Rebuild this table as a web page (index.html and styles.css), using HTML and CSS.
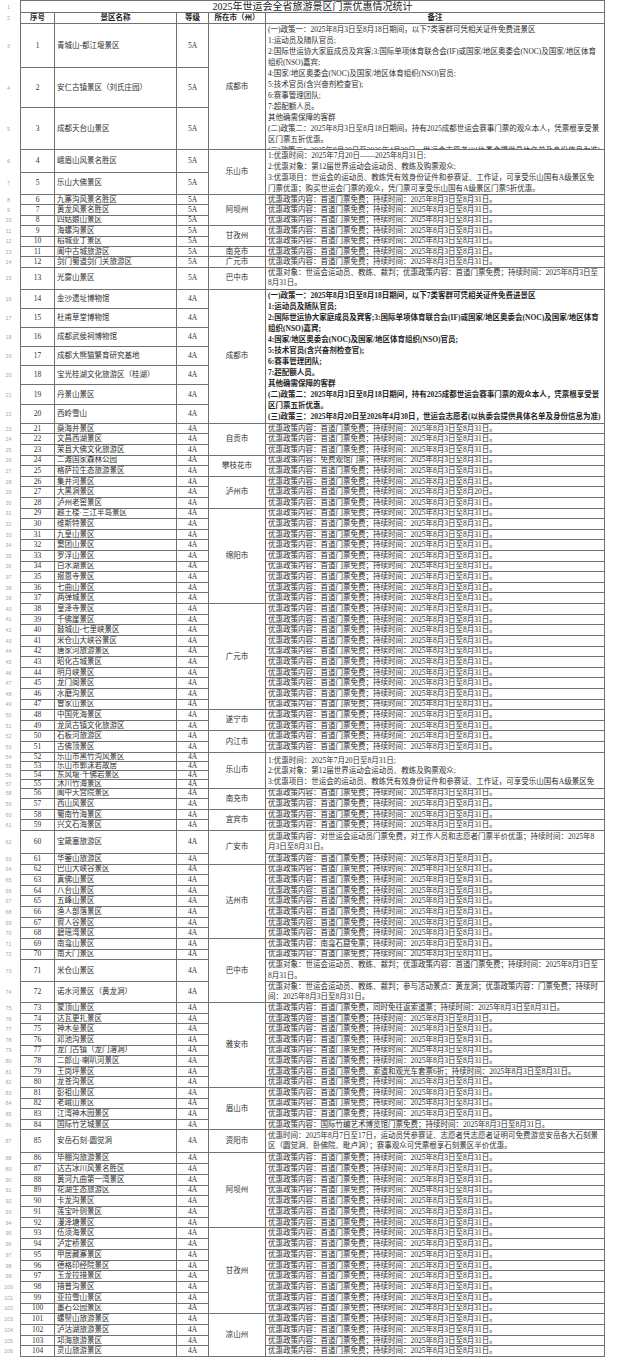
FILE: index.html
```html
<!DOCTYPE html>
<html lang="zh-CN">
<head>
<meta charset="utf-8">
<title>2025年世运会全省旅游景区门票优惠情况统计</title>
<link rel="stylesheet" href="styles.css">
</head>
<body>
<div class="page">
  <div class="rh rows">
    <span>1</span><span>2</span><span>3</span><span>4</span><span>5</span><span>6</span><span>7</span><span>8</span><span>9</span><span>10</span>
    <span>11</span><span>12</span><span>13</span><span>14</span><span>15</span><span>16</span><span>17</span><span>18</span><span>19</span><span>20</span>
    <span>21</span><span>22</span><span>23</span><span>24</span><span>25</span><span>26</span><span>27</span><span>28</span><span>29</span><span>30</span>
    <span>31</span><span>32</span><span>33</span><span>34</span><span>35</span><span>36</span><span>37</span><span>38</span><span>39</span><span>40</span>
    <span>41</span><span>42</span><span>43</span><span>44</span><span>45</span><span>46</span><span>47</span><span>48</span><span>49</span><span>50</span>
    <span>51</span><span>52</span><span>53</span><span>54</span><span>55</span><span>56</span><span>57</span><span>58</span><span>59</span><span>60</span>
    <span>61</span><span>62</span><span>63</span><span>64</span><span>65</span><span>66</span><span>67</span><span>68</span><span>69</span><span>70</span>
    <span>71</span><span>72</span><span>73</span><span>74</span><span>75</span><span>76</span><span>77</span><span>78</span><span>79</span><span>80</span>
    <span>81</span><span>82</span><span>83</span><span>84</span><span>85</span><span>86</span><span>87</span><span>88</span><span>89</span><span>90</span>
    <span>91</span><span>92</span><span>93</span><span>94</span><span>95</span><span>96</span><span>97</span><span>98</span><span>99</span><span>100</span>
    <span>101</span><span>102</span><span>103</span><span>104</span><span>105</span><span>106</span>
  </div>

  <div class="sheet rows">
    <div class="ttl">2025年世运会全省旅游景区门票优惠情况统计</div>
    <div class="hd">序号</div><div class="hd">景区名称</div><div class="hd">等级</div><div class="hd">所在市（州）</div><div class="hd">备注</div>

    <div class="n">1</div><div class="m">青城山-都江堰景区</div><div class="g">5A</div><div class="t s3">成都市</div>
    <div class="blk s3">
      <div>(一)政策一：2025年8月3日至8月18日期间，以下7类客群可凭相关证件免费进景区</div>
      <div>1:运动员及随队官员;</div>
      <div>2:国际世运协大家庭成员及宾客;3:国际单项体育联合会(IF)或国家/地区奥委会(NOC)及国家/地区体育</div>
      <div>组织(NSO)嘉宾;</div>
      <div>4:国家/地区奥委会(NOC)及国家/地区体育组织(NSO)官员;</div>
      <div>5:技术官员(含兴奋剂检查官);</div>
      <div>6:赛事管理团队;</div>
      <div>7:超配额人员。</div>
      <div>其他确需保障的客群</div>
      <div>(二)政策二：2025年8月3日至8月18日期间，持有2025成都世运会赛事门票的观众本人，凭票根享受景</div>
      <div>区门票五折优惠。</div>
      <div class="cut"><span>(三)政策三：2025年8月20日至2026年4月30日，世运会志愿者(以执委会提供具体名单及身份信息为准)</span></div>
    </div>
    <div class="n">2</div><div class="m">安仁古镇景区（刘氏庄园）</div><div class="g">5A</div>
    <div class="n">3</div><div class="m">成都天台山景区</div><div class="g">5A</div>

    <div class="n">4</div><div class="m">峨眉山风景名胜区</div><div class="g">5A</div><div class="t s2">乐山市</div>
    <div class="blk s2">
      <div>1:优惠时间：2025年7月20日——2025年8月31日;</div>
      <div>2:优惠对象：第12届世界运动会运动员、教练及购票观众;</div>
      <div>3:优惠项目：世运会的运动员、教练凭有效身份证件和参赛证、工作证，可享受乐山国有A级景区免</div>
      <div>门票优惠；购买世运会门票的观众，凭门票可享受乐山国有A级景区门票5折优惠。</div>
    </div>
    <div class="n">5</div><div class="m">乐山大佛景区</div><div class="g">5A</div>

    <div class="n">6</div><div class="m">九寨沟风景名胜区</div><div class="g">5A</div><div class="t s3">阿坝州</div><div class="r">优惠政策内容：首道门票免费；持续时间：2025年8月3日至8月31日。</div>
    <div class="n">7</div><div class="m">黄龙风景名胜区</div><div class="g">5A</div><div class="r">优惠政策内容：首道门票免费；持续时间：2025年8月3日至8月31日。</div>
    <div class="n">8</div><div class="m">四姑娘山景区</div><div class="g">5A</div><div class="r">优惠政策内容：首道门票免费；持续时间：2025年8月3日至8月31日。</div>
    <div class="n">9</div><div class="m">海螺沟景区</div><div class="g">5A</div><div class="t s2">甘孜州</div><div class="r">优惠政策内容：首道门票免费；持续时间：2025年8月3日至8月31日。</div>
    <div class="n">10</div><div class="m">稻城亚丁景区</div><div class="g">5A</div><div class="r">优惠政策内容：首道门票免费；持续时间：2025年8月3日至8月31日。</div>
    <div class="n">11</div><div class="m">阆中古城旅游区</div><div class="g">5A</div><div class="t">南充市</div><div class="r">优惠政策内容：首道门票免费；持续时间：2025年8月3日至8月31日。</div>
    <div class="n">12</div><div class="m">剑门蜀道剑门关旅游区</div><div class="g">5A</div><div class="t">广元市</div><div class="r">优惠政策内容：首道门票免费；持续时间：2025年8月3日至8月31日。</div>
    <div class="n">13</div><div class="m">光雾山景区</div><div class="g">5A</div><div class="t">巴中市</div>
    <div class="two"><div>优惠对象：世运会运动员、教练、裁判；优惠政策内容：首道门票免费；持续时间：2025年8月3日至</div><div>8月31日。</div></div>

    <div class="n">14</div><div class="m">金沙遗址博物馆</div><div class="g">4A</div><div class="t s7">成都市</div>
    <div class="blk s7 bold">
      <div>(一)政策一：2025年8月3日至8月18日期间，以下7类客群可凭相关证件免费进景区</div>
      <div>1:运动员及随队官员;</div>
      <div>2:国际世运协大家庭成员及宾客;3:国际单项体育联合会(IF)或国家/地区奥委会(NOC)及国家/地区体育</div>
      <div>组织(NSO)嘉宾;</div>
      <div>4:国家/地区奥委会(NOC)及国家/地区体育组织(NSO)官员;</div>
      <div>5:技术官员(含兴奋剂检查官);</div>
      <div>6:赛事管理团队;</div>
      <div>7:超配额人员。</div>
      <div>其他确需保障的客群</div>
      <div>(二)政策二：2025年8月3日至8月18日期间，持有2025成都世运会赛事门票的观众本人，凭票根享受景</div>
      <div>区门票五折优惠。</div>
      <div>(三)政策三：2025年8月20日至2026年4月30日，世运会志愿者(以执委会提供具体名单及身份信息为准)</div>
    </div>
    <div class="n">15</div><div class="m">杜甫草堂博物馆</div><div class="g">4A</div>
    <div class="n">16</div><div class="m">成都武侯祠博物馆</div><div class="g">4A</div>
    <div class="n">17</div><div class="m">成都大熊猫繁育研究基地</div><div class="g">4A</div>
    <div class="n">18</div><div class="m">宝光桂湖文化旅游区（桂湖）</div><div class="g">4A</div>
    <div class="n">19</div><div class="m">丹景山景区</div><div class="g">4A</div>
    <div class="n">20</div><div class="m">西岭雪山</div><div class="g">4A</div>

    <div class="n">21</div><div class="m">燊海井景区</div><div class="g">4A</div><div class="t s3">自贡市</div><div class="r">优惠政策内容：首道门票免费；持续时间：2025年8月3日至8月31日。</div>
    <div class="n">22</div><div class="m">文昌西湖景区</div><div class="g">4A</div><div class="r">优惠政策内容：首道门票免费；持续时间：2025年8月3日至8月31日。</div>
    <div class="n">23</div><div class="m">荣县大佛文化旅游区</div><div class="g">4A</div><div class="r">优惠政策内容：首道门票免费；持续时间：2025年8月3日至8月31日。</div>
    <div class="n">24</div><div class="m">二滩国家森林公园</div><div class="g">4A</div><div class="t s2">攀枝花市</div><div class="r">优惠政策内容：免费观馆门票；持续时间：2025年8月3日至8月31日。</div>
    <div class="n">25</div><div class="m">格萨拉生态旅游景区</div><div class="g">4A</div><div class="r">优惠政策内容：首道门票免费；持续时间：2025年8月3日至8月31日。</div>
    <div class="n">26</div><div class="m">集井河景区</div><div class="g">4A</div><div class="t s3">泸州市</div><div class="r">优惠政策内容：首道门票免费；持续时间：2025年8月3日至8月31日。</div>
    <div class="n">27</div><div class="m">大黑洞景区</div><div class="g">4A</div><div class="r">优惠政策内容：首道门票免费；持续时间：2025年8月3日至8月20日。</div>
    <div class="n">28</div><div class="m">泸州老窖景区</div><div class="g">4A</div><div class="r">优惠政策内容：首道门票免费；持续时间：2025年8月3日至8月31日。</div>
    <div class="n">29</div><div class="m">越王楼·三江半岛景区</div><div class="g">4A</div><div class="t s9">绵阳市</div><div class="r">优惠政策内容：首道门票免费；持续时间：2025年8月3日至8月31日。</div>
    <div class="n">30</div><div class="m">维斯特景区</div><div class="g">4A</div><div class="r">优惠政策内容：首道门票免费；持续时间：2025年8月3日至8月31日。</div>
    <div class="n">31</div><div class="m">九皇山景区</div><div class="g">4A</div><div class="r">优惠政策内容：首道门票免费；持续时间：2025年8月3日至8月31日。</div>
    <div class="n">32</div><div class="m">窦团山景区</div><div class="g">4A</div><div class="r">优惠政策内容：首道门票免费；持续时间：2025年8月3日至8月31日。</div>
    <div class="n">33</div><div class="m">罗浮山景区</div><div class="g">4A</div><div class="r">优惠政策内容：首道门票免费；持续时间：2025年8月3日至8月31日。</div>
    <div class="n">34</div><div class="m">白水湖景区</div><div class="g">4A</div><div class="r">优惠政策内容：首道门票免费；持续时间：2025年8月3日至8月31日。</div>
    <div class="n">35</div><div class="m">报恩寺景区</div><div class="g">4A</div><div class="r">优惠政策内容：首道门票免费；持续时间：2025年8月3日至8月31日。</div>
    <div class="n">36</div><div class="m">七曲山景区</div><div class="g">4A</div><div class="r">优惠政策内容：首道门票免费；持续时间：2025年8月3日至8月31日。</div>
    <div class="n">37</div><div class="m">两弹城景区</div><div class="g">4A</div><div class="r">优惠政策内容：首道门票免费；持续时间：2025年8月3日至8月31日。</div>
    <div class="n">38</div><div class="m">皇泽寺景区</div><div class="g">4A</div><div class="t s10">广元市</div><div class="r">优惠政策内容：首道门票免费；持续时间：2025年8月3日至8月31日。</div>
    <div class="n">39</div><div class="m">千佛崖景区</div><div class="g">4A</div><div class="r">优惠政策内容：首道门票免费；持续时间：2025年8月3日至8月31日。</div>
    <div class="n">40</div><div class="m">鼓城山-七里峡景区</div><div class="g">4A</div><div class="r">优惠政策内容：首道门票免费；持续时间：2025年8月3日至8月31日。</div>
    <div class="n">41</div><div class="m">米仓山大峡谷景区</div><div class="g">4A</div><div class="r">优惠政策内容：首道门票免费；持续时间：2025年8月3日至8月31日。</div>
    <div class="n">42</div><div class="m">唐家河旅游景区</div><div class="g">4A</div><div class="r">优惠政策内容：首道门票免费；持续时间：2025年8月3日至8月31日。</div>
    <div class="n">43</div><div class="m">昭化古城景区</div><div class="g">4A</div><div class="r">优惠政策内容：首道门票免费；持续时间：2025年8月3日至8月31日。</div>
    <div class="n">44</div><div class="m">明月峡景区</div><div class="g">4A</div><div class="r">优惠政策内容：首道门票免费；持续时间：2025年8月3日至8月31日。</div>
    <div class="n">45</div><div class="m">龙门阁景区</div><div class="g">4A</div><div class="r">优惠政策内容：首道门票免费；持续时间：2025年8月3日至8月31日。</div>
    <div class="n">46</div><div class="m">水磨沟景区</div><div class="g">4A</div><div class="r">优惠政策内容：首道门票免费；持续时间：2025年8月3日至8月31日。</div>
    <div class="n">47</div><div class="m">曾家山景区</div><div class="g">4A</div><div class="r">优惠政策内容：首道门票免费；持续时间：2025年8月3日至8月31日。</div>
    <div class="n">48</div><div class="m">中国死海景区</div><div class="g">4A</div><div class="t s2">遂宁市</div><div class="r">优惠政策内容：首道门票免费；持续时间：2025年8月3日至8月31日。</div>
    <div class="n">49</div><div class="m">龙凤古镇文化旅游区</div><div class="g">4A</div><div class="r">优惠政策内容：首道门票免费；持续时间：2025年8月3日至8月31日。</div>
    <div class="n">50</div><div class="m">石板河旅游区</div><div class="g">4A</div><div class="t s2">内江市</div><div class="r">优惠政策内容：首道门票免费；持续时间：2025年8月3日至8月31日。</div>
    <div class="n">51</div><div class="m">古佛顶景区</div><div class="g">4A</div><div class="r">优惠政策内容：首道门票免费；持续时间：2025年8月3日至8月31日。</div>

    <div class="n">52</div><div class="m">乐山市黑竹沟风景区</div><div class="g">4A</div><div class="t s4">乐山市</div>
    <div class="blk s4 pt3">
      <div>1:优惠时间：2025年7月20日至8月31日;</div>
      <div>2:优惠对象：第12届世界运动会运动员、教练及购票观众;</div>
      <div>3:优惠项目：世运会的运动员、教练凭有效身份证件和参赛证、工作证，可享受乐山国有A级景区免</div>
    </div>
    <div class="n">53</div><div class="m">乐山市郭沫若故居</div><div class="g">4A</div>
    <div class="n">54</div><div class="m">东风堰·千佛岩景区</div><div class="g">4A</div>
    <div class="n">55</div><div class="m">沐川竹海景区</div><div class="g">4A</div>

    <div class="n">56</div><div class="m">阆中天宫院景区</div><div class="g">4A</div><div class="t s2">南充市</div><div class="r">优惠政策内容：首道门票免费；持续时间：2025年8月3日至8月31日。</div>
    <div class="n">57</div><div class="m">西山风景区</div><div class="g">4A</div><div class="r">优惠政策内容：首道门票免费；持续时间：2025年8月3日至8月31日。</div>
    <div class="n">58</div><div class="m">蜀南竹海景区</div><div class="g">4A</div><div class="t s2">宜宾市</div><div class="r">优惠政策内容：首道门票免费；持续时间：2025年8月3日至8月31日。</div>
    <div class="n">59</div><div class="m">兴文石海景区</div><div class="g">4A</div><div class="r">优惠政策内容：首道门票免费；持续时间：2025年8月3日至8月31日。</div>
    <div class="n">60</div><div class="m">宝箴塞旅游区</div><div class="g">4A</div><div class="t s2">广安市</div>
    <div class="two"><div>优惠政策内容：对世运会运动员门票免费，对工作人员和志愿者门票半价优惠；持续时间：2025年8</div><div>月3日至8月31日。</div></div>
    <div class="n">61</div><div class="m">华蓥山旅游区</div><div class="g">4A</div><div class="r">优惠政策内容：首道门票免费；持续时间：2025年8月3日至8月31日。</div>
    <div class="n">62</div><div class="m">巴山大峡谷景区</div><div class="g">4A</div><div class="t s7">达州市</div><div class="r">优惠政策内容：首道门票免费；持续时间：2025年8月3日至8月31日。</div>
    <div class="n">63</div><div class="m">真佛山景区</div><div class="g">4A</div><div class="r">优惠政策内容：首道门票免费；持续时间：2025年8月3日至8月31日。</div>
    <div class="n">64</div><div class="m">八台山景区</div><div class="g">4A</div><div class="r">优惠政策内容：首道门票免费；持续时间：2025年8月3日至8月31日。</div>
    <div class="n">65</div><div class="m">五峰山景区</div><div class="g">4A</div><div class="r">优惠政策内容：首道门票免费；持续时间：2025年8月3日至8月31日。</div>
    <div class="n">66</div><div class="m">渔人部落景区</div><div class="g">4A</div><div class="r">优惠政策内容：首道门票免费；持续时间：2025年8月3日至8月31日。</div>
    <div class="n">67</div><div class="m">賨人谷景区</div><div class="g">4A</div><div class="r">优惠政策内容：首道门票免费；持续时间：2025年8月3日至8月31日。</div>
    <div class="n">68</div><div class="m">碧瑶湾景区</div><div class="g">4A</div><div class="r">优惠政策内容：首道门票免费；持续时间：2025年8月3日至8月31日。</div>
    <div class="n">69</div><div class="m">南龛山景区</div><div class="g">4A</div><div class="t s4">巴中市</div><div class="r">优惠政策内容：南龛石窟免票；持续时间：2025年8月3日至8月31日。</div>
    <div class="n">70</div><div class="m">南天门景区</div><div class="g">4A</div><div class="r">优惠政策内容：首道门票免费；持续时间：2025年8月3日至8月31日。</div>
    <div class="n">71</div><div class="m">米仓山景区</div><div class="g">4A</div>
    <div class="two"><div>优惠对象：世运会运动员、教练、裁判；优惠政策内容：首道门票免费；持续时间：2025年8月3日至</div><div>8月31日。</div></div>
    <div class="n">72</div><div class="m">诺水河景区（黄龙洞）</div><div class="g">4A</div>
    <div class="two"><div>优惠对象：世运会运动员、教练、裁判；参与活动景点：黄龙洞；优惠政策内容：门票免费；持续时</div><div>间：2025年8月3日至8月31日。</div></div>
    <div class="n">73</div><div class="m">蒙顶山景区</div><div class="g">4A</div><div class="t s8">雅安市</div><div class="r">优惠政策内容：首道门票免费，同时免往返索道票；持续时间：2025年8月3日至8月31日。</div>
    <div class="n">74</div><div class="m">达瓦更扎景区</div><div class="g">4A</div><div class="r">优惠政策内容：首道门票免费；持续时间：2025年8月3日至8月31日。</div>
    <div class="n">75</div><div class="m">神木垒景区</div><div class="g">4A</div><div class="r">优惠政策内容：首道门票免费；持续时间：2025年8月3日至8月31日。</div>
    <div class="n">76</div><div class="m">邓池沟景区</div><div class="g">4A</div><div class="r">优惠政策内容：首道门票免费；持续时间：2025年8月3日至8月31日。</div>
    <div class="n">77</div><div class="m">龙门古镇（龙门溶洞）</div><div class="g">4A</div><div class="r">优惠政策内容：首道门票免费；持续时间：2025年8月3日至8月31日。</div>
    <div class="n">78</div><div class="m">二郎山·喇叭河景区</div><div class="g">4A</div><div class="r">优惠政策内容：首道门票免费；持续时间：2025年8月3日至8月31日。</div>
    <div class="n">79</div><div class="m">王岗坪景区</div><div class="g">4A</div><div class="r">优惠政策内容：首道门票免费、索道和观光车套票6折；持续时间：2025年8月3日至8月31日。</div>
    <div class="n">80</div><div class="m">龙苍沟景区</div><div class="g">4A</div><div class="r">优惠政策内容：首道门票免费；持续时间：2025年8月3日至8月31日。</div>
    <div class="n">81</div><div class="m">彭祖山景区</div><div class="g">4A</div><div class="t s4">眉山市</div><div class="r">优惠政策内容：首道门票免费；持续时间：2025年8月3日至8月31日。</div>
    <div class="n">82</div><div class="m">老峨山景区</div><div class="g">4A</div><div class="r">优惠政策内容：首道门票免费；持续时间：2025年8月3日至8月31日。</div>
    <div class="n">83</div><div class="m">江湾神木园景区</div><div class="g">4A</div><div class="r">优惠政策内容：首道门票免费；持续时间：2025年8月3日至8月31日。</div>
    <div class="n">84</div><div class="m">国际竹艺城景区</div><div class="g">4A</div><div class="r">优惠政策内容：国际竹编艺术博览馆门票免费；持续时间：2025年8月3日至8月31日。</div>
    <div class="n">85</div><div class="m">安岳石刻·圆觉洞</div><div class="g">4A</div><div class="t">资阳市</div>
    <div class="two"><div>优惠时间：2025年8月7日至17日，运动员凭参赛证、志愿者凭志愿者证明可免费游览安岳各大石刻景</div><div>区（圆觉洞、卧佛院、毗卢洞）；赛事观众可凭票根享石刻景区半价优惠。</div></div>
    <div class="n">86</div><div class="m">毕棚沟旅游景区</div><div class="g">4A</div><div class="t s7">阿坝州</div><div class="r">优惠政策内容：首道门票免费；持续时间：2025年8月3日至8月31日。</div>
    <div class="n">87</div><div class="m">达古冰川风景名胜区</div><div class="g">4A</div><div class="r">优惠政策内容：首道门票免费；持续时间：2025年8月3日至8月31日。</div>
    <div class="n">88</div><div class="m">黄河九曲第一湾景区</div><div class="g">4A</div><div class="r">优惠政策内容：首道门票免费；持续时间：2025年8月3日至8月31日。</div>
    <div class="n">89</div><div class="m">花湖生态旅游区</div><div class="g">4A</div><div class="r">优惠政策内容：首道门票免费；持续时间：2025年8月3日至8月31日。</div>
    <div class="n">90</div><div class="m">卡龙沟景区</div><div class="g">4A</div><div class="r">优惠政策内容：首道门票免费；持续时间：2025年8月3日至8月31日。</div>
    <div class="n">91</div><div class="m">莲宝叶则景区</div><div class="g">4A</div><div class="r">优惠政策内容：首道门票免费；持续时间：2025年8月3日至8月31日。</div>
    <div class="n">92</div><div class="m">漫泽塘景区</div><div class="g">4A</div><div class="r">优惠政策内容：首道门票免费；持续时间：2025年8月3日至8月31日。</div>
    <div class="n">93</div><div class="m">伍须海景区</div><div class="g">4A</div><div class="t s8">甘孜州</div><div class="r">优惠政策内容：首道门票免费；持续时间：2025年8月3日至8月31日。</div>
    <div class="n">94</div><div class="m">泸定桥景区</div><div class="g">4A</div><div class="r">优惠政策内容：首道门票免费；持续时间：2025年8月3日至8月31日。</div>
    <div class="n">95</div><div class="m">甲居藏寨景区</div><div class="g">4A</div><div class="r">优惠政策内容：首道门票免费；持续时间：2025年8月3日至8月31日。</div>
    <div class="n">96</div><div class="m">德格印经院景区</div><div class="g">4A</div><div class="r">优惠政策内容：首道门票免费；持续时间：2025年8月3日至8月31日。</div>
    <div class="n">97</div><div class="m">玉龙拉措景区</div><div class="g">4A</div><div class="r">优惠政策内容：首道门票免费；持续时间：2025年8月3日至8月31日。</div>
    <div class="n">98</div><div class="m">措普沟景区</div><div class="g">4A</div><div class="r">优惠政策内容：首道门票免费；持续时间：2025年8月3日至8月31日。</div>
    <div class="n">99</div><div class="m">亚拉雪山景区</div><div class="g">4A</div><div class="r">优惠政策内容：首道门票免费；持续时间：2025年8月3日至8月31日。</div>
    <div class="n">100</div><div class="m">墨石公园景区</div><div class="g">4A</div><div class="r">优惠政策内容：首道门票免费；持续时间：2025年8月3日至8月31日。</div>
    <div class="n">101</div><div class="m">螺髻山旅游景区</div><div class="g">4A</div><div class="t s4">凉山州</div><div class="r">优惠政策内容：首道门票免费；持续时间：2025年8月3日至8月31日。</div>
    <div class="n">102</div><div class="m">泸沽湖旅游景区</div><div class="g">4A</div><div class="r">优惠政策内容：首道门票免费；持续时间：2025年8月3日至8月31日。</div>
    <div class="n">103</div><div class="m">邛海旅游景区</div><div class="g">4A</div><div class="r">优惠政策内容：首道门票免费；持续时间：2025年8月3日至8月31日。</div>
    <div class="n">104</div><div class="m">灵山旅游景区</div><div class="g">4A</div><div class="r">优惠政策内容：首道门票免费；持续时间：2025年8月3日至8月31日。</div>
  </div>
</div>
</body>
</html>
```

FILE: styles.css
```css
html, body {
  margin: 0;
  padding: 0;
  background: #ffffff;
}

body {
  font-family: "Liberation Serif", "Noto Sans CJK SC", serif;
  color: #2e2e2e;
}

.page {
  display: flex;
  align-items: flex-start;
  width: 640px;
}

.rows {
  grid-template-rows:
    11px 10px
    43px 39px 41px
    21.5px 21.5px
    repeat(7, 9.4px)
    21px
    repeat(7, 18.15px)
    repeat(31, 9.62px)
    repeat(4, 8px)
    repeat(4, 9.62px)
    22px
    repeat(10, 9.62px)
    21px 20px
    repeat(12, 9.62px)
    22px
    repeat(19, 9.72px);
}

/* Excel row-number gutter */
.rh {
  display: grid;
  width: 20px;
  padding-top: 1px;
  row-gap: 1px;
}

.rh span {
  display: flex;
  align-items: center;
  justify-content: center;
  padding-right: 3px;
  font-family: "Liberation Sans", sans-serif;
  font-size: 5.5px;
  color: #a9a9a9;
  overflow: hidden;
}

/* the sheet: gap lines act as cell borders */
.sheet {
  display: grid;
  grid-template-columns: 33px 121px 31px 56px 338px;
  gap: 1px;
  padding: 1px;
  background: #707070;
}

.sheet > div {
  background: #ffffff;
  font-size: 7.5px;
  line-height: 10px;
  white-space: nowrap;
  overflow: hidden;
  display: flex;
  align-items: center;
  min-width: 0;
  min-height: 0;
}

.ttl {
  grid-column: 1 / -1;
  justify-content: center;
  font-size: 10px !important;
  color: #222;
}

.hd {
  justify-content: center;
  font-weight: 700;
  color: #1c1c1c;
}

.n, .g, .t {
  justify-content: center;
}

.m {
  padding-left: 2px;
}

.r {
  padding-left: 2px;
}

.sheet > .blk {
  display: block;
  padding: 0 2px;
  line-height: 11px;
}

/* last line of the Chengdu block is cut by the cell edge */
.cut {
  height: 5px;
  overflow: hidden;
}

.cut span {
  display: block;
  line-height: 11px;
}

.sheet > .pt3 {
  padding-top: 3px;
  line-height: 10.5px;
}

.bold {
  font-weight: 700;
  color: #1f1f1f;
}

.sheet > .two {
  flex-direction: column;
  align-items: flex-start;
  justify-content: center;
  padding-left: 2px;
  line-height: 10.5px;
}

.s2 { grid-row: span 2; }
.s3 { grid-row: span 3; }
.s4 { grid-row: span 4; }
.s7 { grid-row: span 7; }
.s8 { grid-row: span 8; }
.s9 { grid-row: span 9; }
.s10 { grid-row: span 10; }
```
